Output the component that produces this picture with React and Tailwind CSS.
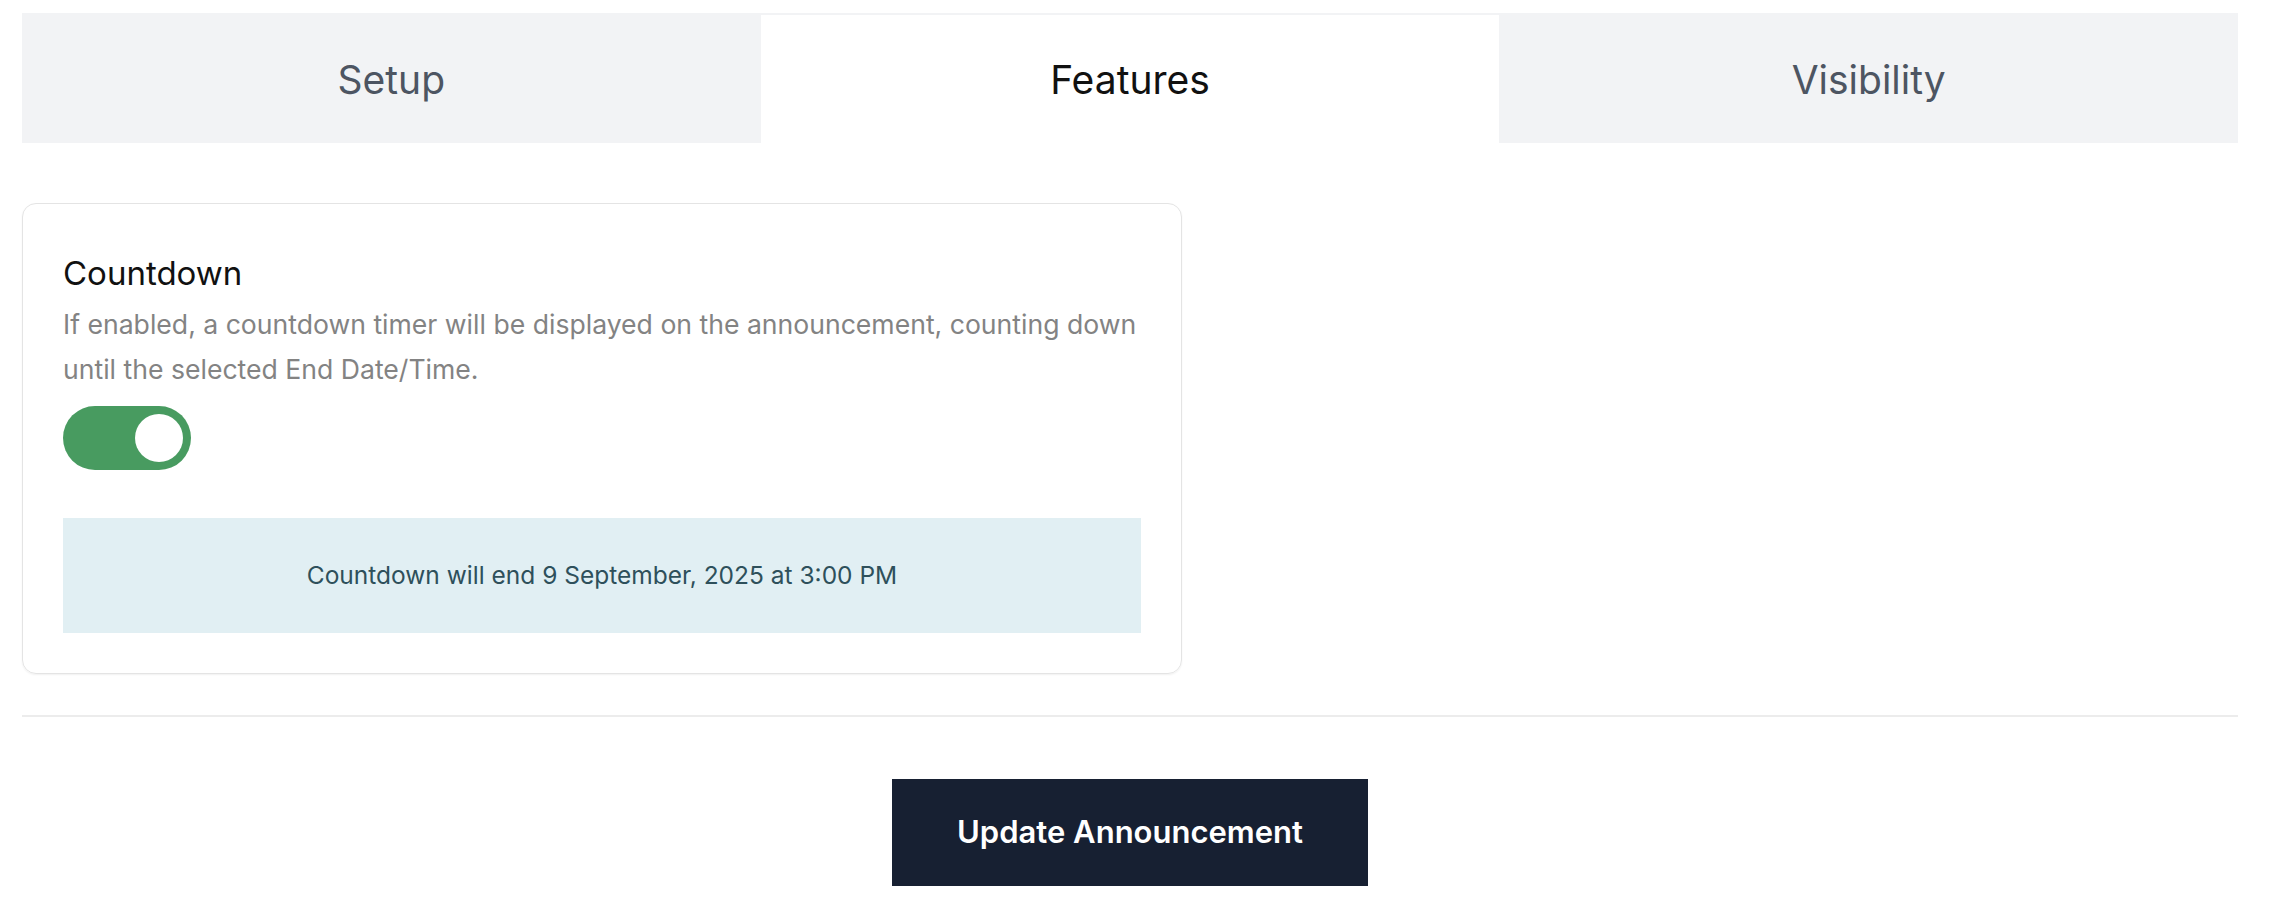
import { useState } from "react";

// Announcement editor — Features tab with countdown toggle

const TABS = ["Setup", "Features", "Visibility"];

function Toggle({ on, onChange }) {
  return (
    <button
      type="button"
      onClick={() => onChange(!on)}
      className={`flex items-center w-[128px] h-[64px] rounded-full px-[8px] ${
        on ? "bg-[#489b60] justify-end" : "bg-gray-300 justify-start"
      }`}
    >
      <span className="block w-[48px] h-[48px] rounded-full bg-white" />
    </button>
  );
}

export default function App() {
  const [tab, setTab] = useState("Features");
  const [countdown, setCountdown] = useState(true);

  return (
    <div className="min-h-screen bg-white pl-[22px] pr-[44px] pt-[13px] font-['Inter',sans-serif]">
      {/* Tabs */}
      <div className="grid grid-cols-3 h-[130px] bg-[#f2f3f5] pt-[2px]">
        {TABS.map((t) => (
          <button
            key={t}
            type="button"
            onClick={() => setTab(t)}
            className={`flex items-center justify-center pt-[2px] text-[39px] ${
              tab === t ? "bg-white text-[#111111]" : "text-[#4d5562]"
            }`}
          >
            {t}
          </button>
        ))}
      </div>

      {/* Countdown card */}
      <div className="pt-[60px]">
        <div className="w-[1160px] rounded-[14px] border border-[#e4e4e4] shadow-[0_1px_2px_rgba(0,0,0,0.06)] px-[40px] pt-[45px] pb-[40px]">
          <h3 className="text-[33px] leading-[48px] text-[#111111]">Countdown</h3>
          <p className="mt-[5px] text-[26.6px] leading-[45px] text-[#838383]">
            If enabled, a countdown timer will be displayed on the announcement, counting down
            until the selected End Date/Time.
          </p>
          <div className="mt-[14px]">
            <Toggle on={countdown} onChange={setCountdown} />
          </div>
          <div className="mt-[48px] h-[115px] flex items-center justify-center bg-[#e1eff3] text-[24.5px] text-[#2e505b]">
            Countdown will end 9 September, 2025 at 3:00 PM
          </div>
        </div>
      </div>

      {/* Footer */}
      <div className="mt-[41px] h-[2px] bg-[#ececec]" />
      <div className="flex justify-center pt-[62px]">
        <button
          type="button"
          className="w-[476px] h-[107px] bg-[#172032] text-white text-[31px] font-semibold"
        >
          Update Announcement
        </button>
      </div>
    </div>
  );
}
